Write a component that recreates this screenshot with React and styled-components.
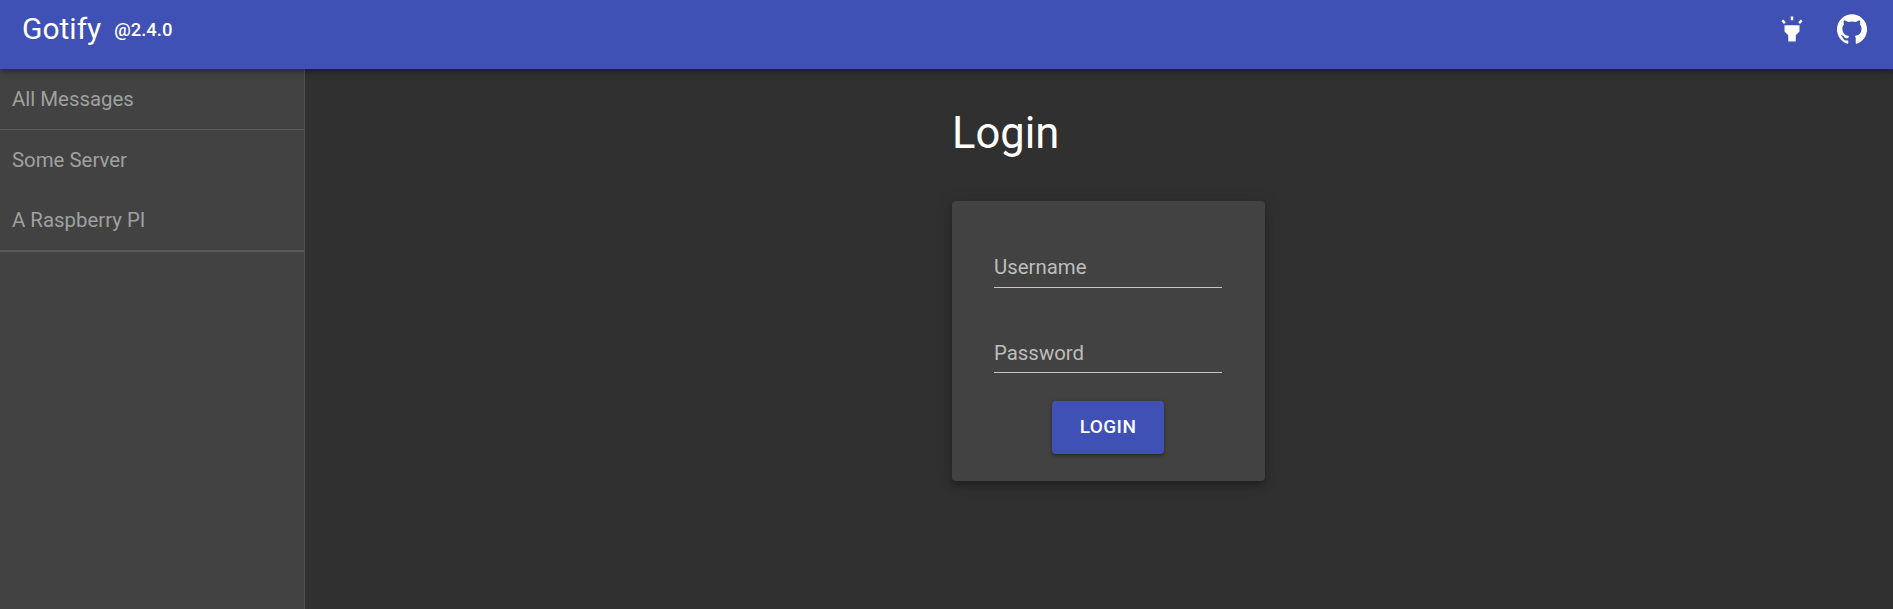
import React from "react";
import styled, { createGlobalStyle } from "styled-components";

const GlobalStyle = createGlobalStyle`
  html, body, #root {
    height: 100%;
    margin: 0;
  }
  body {
    background: #303030;
    font-family: Roboto, "Liberation Sans", sans-serif;
    overflow: hidden;
  }
`;

const Page = styled.div`
  display: flex;
  flex-direction: column;
  height: 609px;
`;

const AppBar = styled.header`
  position: relative;
  z-index: 2;
  flex: 0 0 69px;
  display: flex;
  align-items: flex-start;
  justify-content: space-between;
  padding: 10px 26px 0 22px;
  box-sizing: border-box;
  background: #3f51b5;
  color: #fff;
  box-shadow: 0 2px 4px -1px rgba(0, 0, 0, 0.2), 0 4px 5px 0 rgba(0, 0, 0, 0.14), 0 1px 10px 0 rgba(0, 0, 0, 0.12);
`;

const Brand = styled.div`
  display: flex;
  align-items: center;
  gap: 13px;
`;

const Title = styled.span`
  font-size: 30px;
  line-height: 38px;
`;

const Version = styled.span`
  font-size: 18.4px;
  font-weight: 500;
`;

const Actions = styled.div`
  display: flex;
  align-items: center;
  gap: 30px;
  padding-top: 4px;
`;

const Icon = styled.svg`
  width: 30px;
  height: 30px;
  fill: #fff;
  display: block;
`;

const Body = styled.div`
  flex: 1;
  display: flex;
  min-height: 0;
`;

const Sidebar = styled.nav`
  flex: 0 0 305px;
  box-sizing: border-box;
  background: #424242;
  border-right: 1px solid #515151;
`;

const NavGroup = styled.div`
  border-bottom: ${(p) => p.$rule}px solid #595959;
`;

const NavItem = styled.div`
  height: 60px;
  display: flex;
  align-items: center;
  padding-left: 12px;
  font-size: 20.4px;
  color: #a0a0a0;
`;

const Main = styled.main`
  flex: 1;
  padding-left: 647px;
`;

const Heading = styled.h1`
  margin: 0;
  padding: 35px 0 37px;
  font-size: 43.5px;
  line-height: 60px;
  font-weight: 400;
  color: #fff;
`;

const Card = styled.form`
  width: 313px;
  height: 280px;
  box-sizing: border-box;
  padding: 42px 43px 0 42px;
  background: #424242;
  border-radius: 4px;
  box-shadow: 0 3px 5px -1px rgba(0, 0, 0, 0.2), 0 6px 10px 0 rgba(0, 0, 0, 0.14), 0 1px 18px 0 rgba(0, 0, 0, 0.12);
  display: flex;
  flex-direction: column;
`;

const Field = styled.label`
  display: flex;
  align-items: flex-end;
  height: 45px;
  line-height: 24px;
  padding-bottom: ${(p) => p.$lift}px;
  margin-bottom: ${(p) => p.$gap}px;
  border-bottom: 1px solid #c4c4c4;
  box-sizing: border-box;
  font-size: 20.4px;
  color: #bdbdbd;
`;

const Submit = styled.button`
  align-self: center;
  width: 112px;
  height: 53px;
  padding: 0 0 3px;
  border: none;
  border-radius: 4px;
  background: #3f51b5;
  color: #fff;
  font: 500 19px Roboto, sans-serif;
  letter-spacing: 0.4px;
  box-shadow: 0 1px 5px 0 rgba(0, 0, 0, 0.2), 0 2px 2px 0 rgba(0, 0, 0, 0.14), 0 3px 1px -2px rgba(0, 0, 0, 0.12);
`;

export default function App() {
  return (
    <Page>
      <GlobalStyle />
      <AppBar>
        <Brand>
          <Title>Gotify</Title>
          <Version>@2.4.0</Version>
        </Brand>
        <Actions>
          <Icon viewBox="0 0 24 24">
            <path d="M6 14l3 3v5h6v-5l3-3V9H6zm5-12h2v3h-2zM3.5 5.875 4.914 4.46l2.12 2.122L5.62 7.997zm13.46.71 2.123-2.12 1.414 1.414L18.375 8z" />
          </Icon>
          <Icon viewBox="0 0 24 24">
            <path d="M12 .3a12 12 0 0 0-3.8 23.4c.6.1.8-.3.8-.6v-2c-3.3.7-4-1.6-4-1.6-.6-1.4-1.4-1.8-1.4-1.8-1-.7.1-.7.1-.7 1.2 0 1.9 1.2 1.9 1.2 1 1.8 2.8 1.3 3.5 1 0-.8.4-1.3.7-1.6-2.7-.3-5.5-1.3-5.5-6 0-1.2.5-2.3 1.3-3.1-.2-.4-.6-1.6 0-3.2 0 0 1-.3 3.4 1.2a11.5 11.5 0 0 1 6 0c2.3-1.5 3.3-1.2 3.3-1.2.6 1.6.2 2.8 0 3.2.9.8 1.3 1.9 1.3 3.2 0 4.6-2.8 5.6-5.5 5.9.5.4.9 1 .9 2.2v3.3c0 .3.1.7.8.6A12 12 0 0 0 12 .3" />
          </Icon>
        </Actions>
      </AppBar>
      <Body>
        <Sidebar>
          <NavGroup $rule={1}>
            <NavItem>All Messages</NavItem>
          </NavGroup>
          <NavGroup $rule={2}>
            <NavItem>Some Server</NavItem>
            <NavItem>A Raspberry PI</NavItem>
          </NavGroup>
        </Sidebar>
        <Main>
          <Heading>Login</Heading>
          <Card>
            <Field $gap={40} $lift={8}>Username</Field>
            <Field $gap={28} $lift={7}>Password</Field>
            <Submit type="button">LOGIN</Submit>
          </Card>
        </Main>
      </Body>
    </Page>
  );
}
